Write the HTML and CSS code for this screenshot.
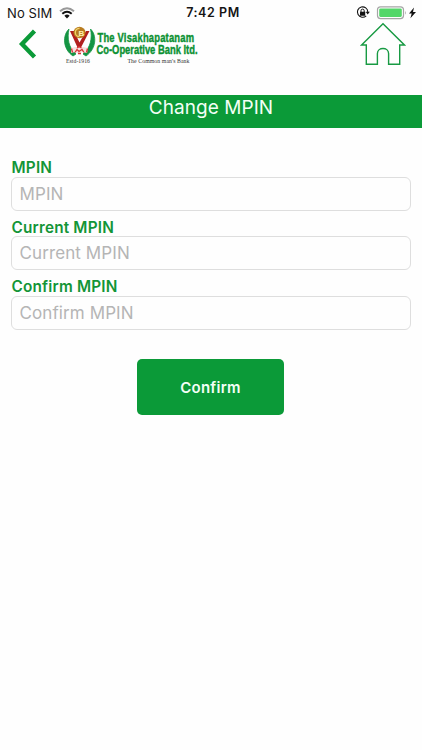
FILE: index.html
```html
<!DOCTYPE html>
<html lang="en">
<head>
<meta charset="utf-8">
<title>Change MPIN</title>
<link rel="stylesheet" href="styles.css">
</head>
<body>
<div class="status">
  <div class="carrier"><span>No SIM</span>
    <svg width="16" height="12" viewBox="0 0 16 12" fill="none" stroke-width="2"><path d="M1 4.2Q8-1.8 15 4.2" stroke="#999"/><path d="M3.3 6.8Q8 2.8 12.7 6.8" stroke="#111"/><path d="M5.4 8.7Q8 6.5 10.6 8.7L8 11.5Z" fill="#111"/></svg>
  </div>
  <span class="time">7:42 PM</span>
  <svg class="power" width="62" height="16" viewBox="0 0 62 16">
    <path d="M10.2 10.8A5.2 5.2 0 1 1 11.8 7" fill="none" stroke="#111" stroke-width="1.1"/>
    <path d="M9.600 6.800h4.200l-2.100 2.700z" fill="#111"/>
    <rect x="4" y="6.700" width="5.200" height="4" rx=".5" fill="#111"/>
    <path d="M5 7V5.700a1.600 1.600 0 0 1 3.200 0V7" fill="none" stroke="#111"/>
    <rect x="21.500" y="1.800" width="26" height="11.800" rx="3" fill="#fff" stroke="#a5a5a5" stroke-width="1.200"/>
    <rect x="23.200" y="3.500" width="22.600" height="8.400" rx="1.300" fill="#53d769"/>
    <path d="M49 5.700q1.600 2 0 4z" fill="#a5a5a5"/>
    <path d="M58 2.600l-5 6h2.700L54.400 13.200 60 6.900h-3z" fill="#111"/>
  </svg>
</div>
<header class="header">
  <svg class="back" width="20" height="30" viewBox="0 0 20 30"><path d="M16.500 2L4 15L16.500 28" fill="none" stroke="#0b9a38" stroke-width="4.400"/></svg>
  <svg class="logo" width="140" height="44" viewBox="62 20 140 44">
    <path d="M69 27C62.500 33 62.500 47 73 54L76 52C68.500 46 67 36 69 27Z" fill="#149443" stroke="#149443" stroke-width=".8"/>
    <path d="M90.500 27C97 33 96.500 47 86 54L83 52C90.500 46 92.500 36 90.500 27Z" fill="#149443" stroke="#149443" stroke-width=".8"/>
    <path d="M70 29L77.500 45.500H81L89.500 29H86L79.500 40.500L74 29Z" fill="#b0201e"/>
    <ellipse cx="79.500" cy="30.500" rx="6" ry="5.800" fill="#b87c20"/>
    <path d="M79.500 26.300A4.200 4.200 0 0 0 79.500 34.700" fill="none" stroke="#f0d26b" stroke-width="1.300"/>
    <text x="78.500" y="33.500" class="emblem">B</text>
    <path d="M71 46l4-1 4 1 4-1 5 1-1 5-5-1-3 2-4-2-4 1z" fill="#f7dedb"/>
    <path d="M71.500 46.500l1 4M75 50.500l2-3 2 2 3-2 2 3M87.500 46.500l-1 4M77 46l2-1.500 2.500 1.500M78 51.500h3" fill="none" stroke="#d83235" stroke-width="1.300"/>
    <text x="66" y="61" textLength="24" class="serif">Estd-1916</text>
    <g transform="translate(97.500 40) scale(1 1.28)"><text textLength="96.500" class="bank">The Visakhapatanam</text></g>
    <g transform="translate(96.500 52) scale(1 1.28)"><text textLength="101" class="bank">Co-Operative Bank ltd.</text></g>
    <text x="127.500" y="61.300" textLength="62" class="serif">The Common man's Bank</text>
  </svg>
  <svg class="home" width="46" height="44" viewBox="0 0 46 44"><path d="M1.600 23L23 1.700L44.400 23H39.700V42.300H28.600V31.500C28.600 24.800 17.400 24.800 17.400 31.500V42.300H6.300V23Z" fill="none" stroke="#189a43" stroke-width="1.400"/></svg>
</header>
<h1 class="title">Change MPIN</h1>
<form class="form">
  <label class="field"><span class="label">MPIN</span><input class="input" placeholder="MPIN"></label>
  <label class="field"><span class="label">Current MPIN</span><input class="input" placeholder="Current MPIN"></label>
  <label class="field"><span class="label">Confirm MPIN</span><input class="input" placeholder="Confirm MPIN"></label>
  <button class="confirm" type="button">Confirm</button>
</form>
</body>
</html>
```
FILE: styles.css
```css
* { box-sizing: border-box; }
body { margin: 0; height: 750px; overflow: hidden; background: #fefefe; font-family: Inter, "Liberation Sans", sans-serif; }
.status { height: 22px; padding: 0 4px 0 7px; display: grid; grid-template-columns: 1fr auto 1fr; align-items: center; font-size: 13px; line-height: 22px; color: #151515; }
.carrier { display: flex; align-items: center; gap: 7px; padding-top: 1px; letter-spacing: .1px; }
.time { font-weight: 600; font-size: 12.5px; letter-spacing: .55px; padding: 2px 0 0 1px; }
.power { justify-self: end; margin-top: 1px; }
.header { height: 73px; display: flex; align-items: flex-start; padding: 0 16px 0 18px; }
.back { margin-top: 7px; }
.logo { margin-left: 24px; overflow: visible; }
.home { margin-left: auto; }
.bank { font: bold 9.4px "Liberation Sans", sans-serif; fill: #0b9132; stroke: #0b9132; stroke-width: .3px; }
.serif { font: 5.8px "Liberation Serif", serif; fill: #333; }
.emblem { font: bold 8px "Liberation Sans", sans-serif; fill: #fff0b0; }
.title { margin: 0; height: 33px; background: #0b9a38; color: #f3fff6; font-weight: 400; font-size: 19px; line-height: 25px; letter-spacing: .05px; text-align: center; }
.form { padding: 30px 11px 0; display: flex; flex-direction: column; }
.field { height: 59.5px; display: flex; flex-direction: column; }
.label { height: 18.5px; line-height: 20px; padding-left: .5px; font-size: 15.3px; font-weight: 580; letter-spacing: .2px; color: #139537; }
.input { width: 400px; height: 34px; border: 1px solid #dedede; border-radius: 6px; background: #fefefe; padding: 0 7.5px; font: 17px Inter, sans-serif; letter-spacing: .1px; outline: 0; }
.input::placeholder { color: #b5b5b5; opacity: 1; }
.confirm { align-self: center; margin: 22.5px 1px 0 0; width: 147px; height: 56px; border: 0; border-radius: 5px; background: #0b9a38; color: #f3fff6; font: 600 15px Inter, sans-serif; letter-spacing: .25px; }
```
